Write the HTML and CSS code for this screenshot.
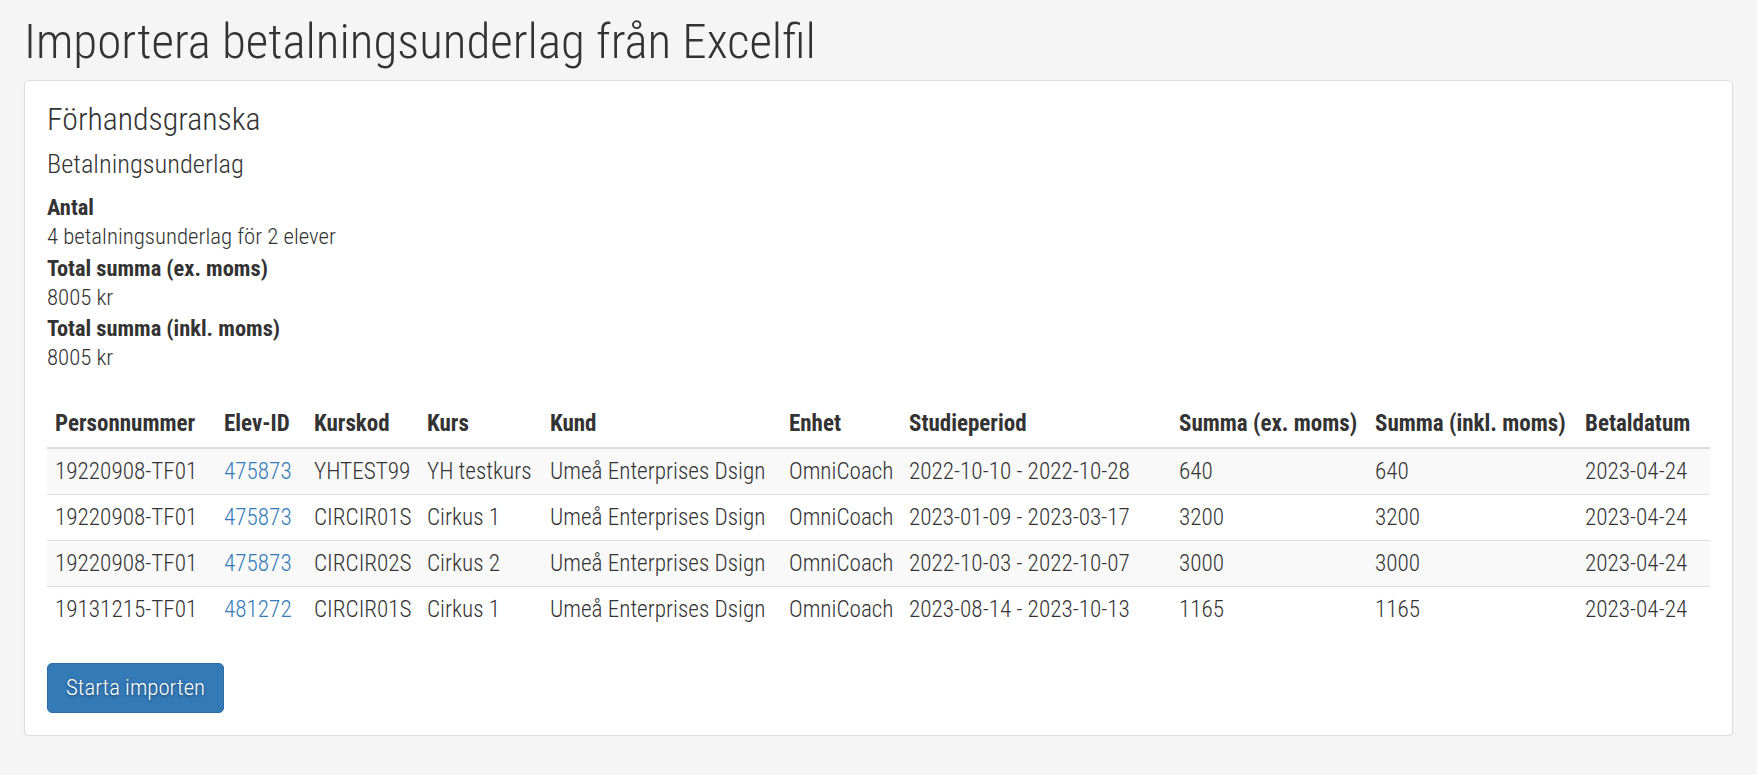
FILE: index.html
```html
<!DOCTYPE html>
<html lang="sv">
<head>
<meta charset="utf-8">
<title>Importera betalningsunderlag från Excelfil</title>
<link rel="stylesheet" href="styles.css">
</head>
<body>
<div class="page">
  <h1 class="page-title">Importera betalningsunderlag från Excelfil</h1>
  <div class="card">
    <h3 class="card-title">Förhandsgranska</h3>
    <h4 class="card-subtitle">Betalningsunderlag</h4>
    <dl class="summary">
      <dt>Antal</dt>
      <dd>4 betalningsunderlag för 2 elever</dd>
      <dt>Total summa (ex. moms)</dt>
      <dd>8005 kr</dd>
      <dt>Total summa (inkl. moms)</dt>
      <dd>8005 kr</dd>
    </dl>
    <table class="preview">
      <colgroup>
        <col class="c1"><col class="c2"><col class="c3"><col class="c4"><col class="c5">
        <col class="c6"><col class="c7"><col class="c8"><col class="c9"><col class="c10">
      </colgroup>
      <thead>
        <tr>
          <th>Personnummer</th><th>Elev-ID</th><th>Kurskod</th><th>Kurs</th><th>Kund</th>
          <th>Enhet</th><th>Studieperiod</th><th>Summa (ex. moms)</th><th>Summa (inkl. moms)</th><th>Betaldatum</th>
        </tr>
      </thead>
      <tbody>
        <tr>
          <td>19220908-TF01</td><td><a href="#">475873</a></td><td>YHTEST99</td><td>YH testkurs</td><td>Umeå Enterprises Dsign</td>
          <td>OmniCoach</td><td>2022-10-10 - 2022-10-28</td><td>640</td><td>640</td><td>2023-04-24</td>
        </tr>
        <tr>
          <td>19220908-TF01</td><td><a href="#">475873</a></td><td>CIRCIR01S</td><td>Cirkus 1</td><td>Umeå Enterprises Dsign</td>
          <td>OmniCoach</td><td>2023-01-09 - 2023-03-17</td><td>3200</td><td>3200</td><td>2023-04-24</td>
        </tr>
        <tr>
          <td>19220908-TF01</td><td><a href="#">475873</a></td><td>CIRCIR02S</td><td>Cirkus 2</td><td>Umeå Enterprises Dsign</td>
          <td>OmniCoach</td><td>2022-10-03 - 2022-10-07</td><td>3000</td><td>3000</td><td>2023-04-24</td>
        </tr>
        <tr>
          <td>19131215-TF01</td><td><a href="#">481272</a></td><td>CIRCIR01S</td><td>Cirkus 1</td><td>Umeå Enterprises Dsign</td>
          <td>OmniCoach</td><td>2023-08-14 - 2023-10-13</td><td>1165</td><td>1165</td><td>2023-04-24</td>
        </tr>
      </tbody>
    </table>
    <button class="btn-primary" type="button">Starta importen</button>
  </div>
</div>
</body>
</html>
```
FILE: styles.css
```css
* { box-sizing: border-box; }
html, body { margin: 0; padding: 0; }
body {
  background: #f5f5f5;
  color: #333;
  font-family: "Roboto Condensed", Roboto, "Liberation Sans", sans-serif;
  font-weight: 300;
  font-size: 22.8px;
  line-height: 30.25px;
}
.page {
  padding: 14px 24px 0 24px;
}
.page-title {
  margin: 0 0 10px 0;
  font-size: 49px;
  line-height: 56px;
  font-weight: 300;
  color: #333;
}
.card {
  background: #fff;
  border: 1px solid #ddd;
  border-radius: 5px;
  box-shadow: 0 1px 2px rgba(0,0,0,0.06);
  padding: 20px 22px 22px 22px;
}
.card-title {
  margin: 0;
  font-size: 31.8px;
  line-height: 36px;
  font-weight: 300;
}
.card-subtitle {
  margin: 11px 0 0 0;
  font-size: 26.4px;
  line-height: 32px;
  font-weight: 300;
}
.summary {
  margin: 12px 0 0 0;
}
.summary dt { font-weight: 700; font-size: 22.4px; }
.summary dd { margin: 0; }
.preview {
  margin-top: 27px;
  width: 100%;
  table-layout: fixed;
  border-collapse: collapse;
  font-size: 23.2px;
  line-height: 29px;
}
.c1 { width: 169px; }
.c2 { width: 90px; }
.c3 { width: 113px; }
.c4 { width: 123px; }
.c5 { width: 239px; }
.c6 { width: 120px; }
.c7 { width: 270px; }
.c8 { width: 196px; }
.c9 { width: 210px; }
.c10 { width: 133px; }
.preview th {
  text-align: left;
  font-weight: 700;
  font-size: 23px;
  line-height: 30px;
  padding: 8px;
  border-bottom: 2px solid #ddd;
  white-space: nowrap;
}
.preview td {
  padding: 8px;
  border-top: 1px solid #ddd;
  white-space: nowrap;
}
.preview tbody tr:first-child td { border-top: 0; }
.preview tbody tr:nth-child(odd) { background: #f9f9f9; }
.preview a { color: #337ab7; text-decoration: none; }
.btn-primary {
  display: inline-block;
  margin-top: 31px;
  padding: 9px 18px;
  font-family: inherit;
  font-weight: 300;
  font-size: 22.8px;
  line-height: 30px;
  color: #fff;
  background: #337ab7;
  border: 1px solid #2e6da4;
  border-radius: 5px;
  text-shadow: 0 1px 3px rgba(0,0,0,0.45);
  cursor: pointer;
}
```
